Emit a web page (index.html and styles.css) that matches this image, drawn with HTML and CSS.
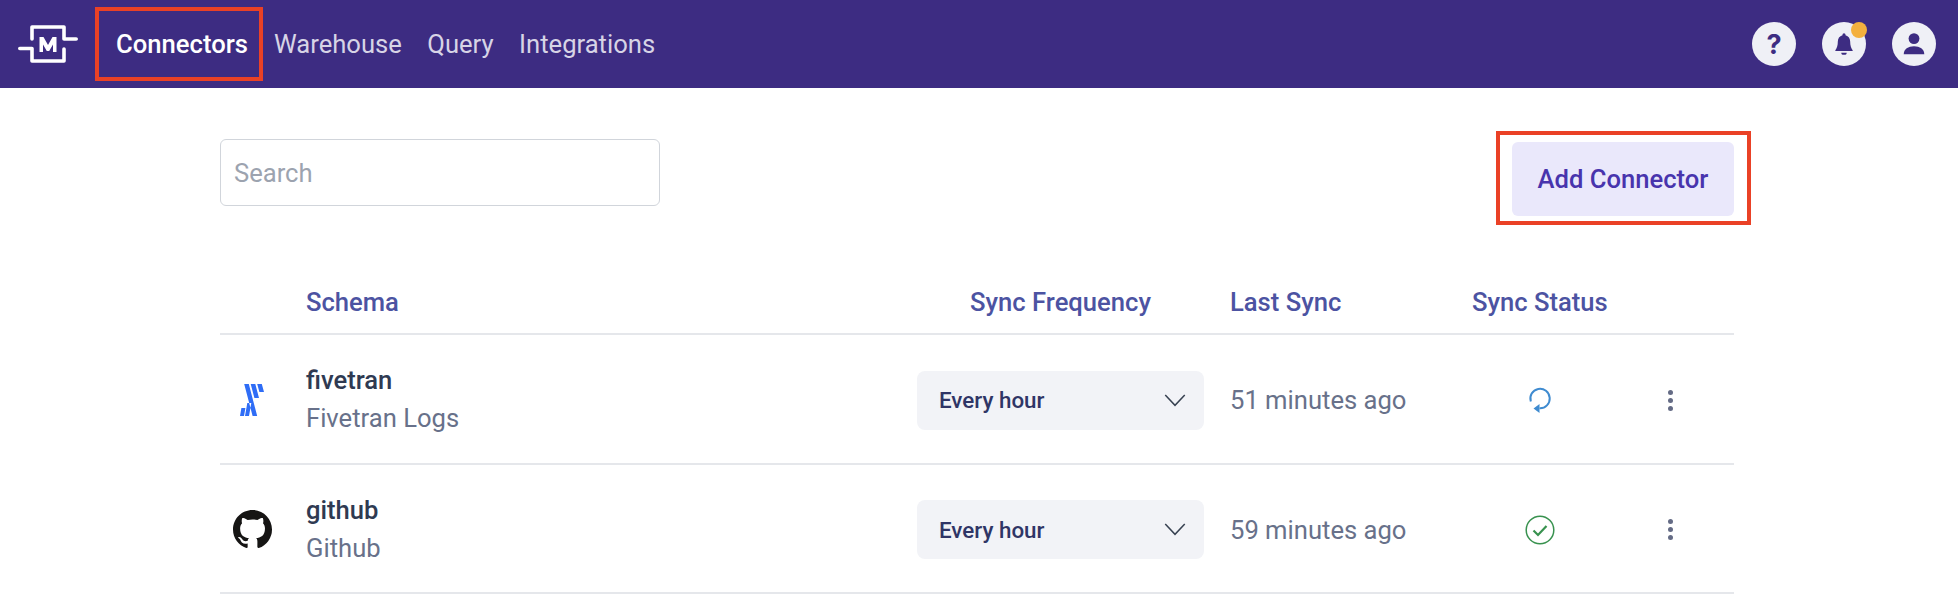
FILE: index.html
```html
<!DOCTYPE html>
<html lang="en">
<head>
<meta charset="utf-8">
<title>Connectors</title>
<link rel="stylesheet" href="styles.css">
</head>
<body>
<header class="topbar">
  <svg class="logo" viewBox="0 0 60 38" aria-hidden="true">
    <path d="M1.800 23.500H14V36H46V24M58.200 14H46V2H14V14" fill="none" stroke="#fff" stroke-width="3.600" stroke-linejoin="round" stroke-linecap="round"/>
    <path d="M21.500 27V12H25.500L30 20L34.500 12H38.500V27H35V19.500L31.200 26H28.800L25 19.500V27Z" fill="#fff"/>
  </svg>
  <nav class="nav">
    <a class="nav-link is-active">Connectors</a>
    <a class="nav-link">Warehouse</a>
    <a class="nav-link">Query</a>
    <a class="nav-link">Integrations</a>
  </nav>
  <div class="top-icons">
    <span class="round-btn round-help">?</span>
    <span class="round-btn round-bell">
      <svg viewBox="0 0 24 24" class="round-icon"><path d="M12 2a1.400 1.400 0 0 0-1.400 1.400v.5C7.800 4.600 6.300 7 6.300 9.800c0 3.700-.8 6.200-2.300 7.900v.8h16v-.8c-1.500-1.700-2.300-4.200-2.300-7.900 0-2.800-1.500-5.200-4.300-5.900v-.5A1.400 1.400 0 0 0 12 2zM9.500 20h5a2.500 2 0 0 1-5 0z" fill="#3d2c82"/></svg>
      <span class="dot"></span>
    </span>
    <span class="round-btn">
      <svg viewBox="0 0 24 24" class="round-icon"><circle cx="12" cy="7" r="5" fill="#3d2c82"/><path d="M2.500 21.500c0-5 4.200-7.500 9.500-7.500s9.500 2.500 9.500 7.500z" fill="#3d2c82"/></svg>
    </span>
  </div>
</header>
<main class="page">
  <div class="toolbar">
    <input class="search" type="text" placeholder="Search">
    <button class="add-btn">Add Connector</button>
  </div>
  <div class="grid-row head-row">
    <span></span>
    <span>Schema</span>
    <span class="head-center">Sync Frequency</span>
    <span>Last Sync</span>
    <span class="status-head">Sync Status</span>
    <span></span>
  </div>
  <div class="grid-row data-row">
    <span class="brand">
      <svg class="fivetran" viewBox="0 0 24 32"><path d="M4.200 0h4.600l8.400 32h-4.600zM10.700 0h4.600l3.700 14h-4.600zM17.200 0h4.600l2.200 8h-4.600zM0 32h4l1.400-8h-4zM5 32h4l2.300-13h-4z" fill="#2f6df6"/></svg>
    </span>
    <span class="schema"><b class="schema-name">fivetran</b><span class="schema-sub">Fivetran Logs</span></span>
    <span class="freq-cell"><span class="select">Every hour<svg class="chev" viewBox="0 0 20 12"><path d="M1 1l9 9.500 9-9.500" fill="none" stroke="#374151" stroke-width="1.400"/></svg></span></span>
    <span class="ago">51 minutes ago</span>
    <span class="status">
      <svg viewBox="0 0 24 28" class="st-sync"><path d="M2.800 15.500A9.700 9.700 0 1 1 11.500 22.200" fill="none" stroke="#3f8bd0" stroke-width="2"/><path d="M5.500 22.500l6-4.500v9z" fill="#3f8bd0"/></svg>
    </span>
    <span class="kebab"><i></i><i></i><i></i></span>
  </div>
  <div class="grid-row data-row data-row-last">
    <span class="brand">
      <svg class="github" viewBox="0 0 16 16"><path fill="#161514" fill-rule="evenodd" d="M8 0C3.580 0 0 3.580 0 8c0 3.540 2.290 6.530 5.470 7.590.4.070.55-.17.550-.38 0-.19-.01-.82-.01-1.490-2.010.37-2.530-.49-2.690-.94-.09-.23-.48-.94-.82-1.130-.28-.15-.68-.52-.01-.53.63-.01 1.080.58 1.230.82.720 1.210 1.870.870 2.330.660.070-.520.280-.870.510-1.070-1.780-.200-3.640-.890-3.640-3.950 0-.870.310-1.590.820-2.150-.080-.200-.360-1.020.080-2.120 0 0 .670-.210 2.200.820.640-.180 1.320-.270 2-.270s1.360.090 2 .270c1.530-1.040 2.200-.820 2.200-.820.440 1.100.160 1.920.080 2.120.510.560.820 1.270.820 2.150 0 3.070-1.870 3.750-3.650 3.950.290.250.540.730.540 1.480 0 1.070-.010 1.930-.010 2.200 0 .210.150.460.550.380A8.010 8.010 0 0 0 16 8c0-4.420-3.580-8-8-8z"/></svg>
    </span>
    <span class="schema"><b class="schema-name">github</b><span class="schema-sub">Github</span></span>
    <span class="freq-cell"><span class="select">Every hour<svg class="chev" viewBox="0 0 20 12"><path d="M1 1l9 9.500 9-9.500" fill="none" stroke="#374151" stroke-width="1.400"/></svg></span></span>
    <span class="ago">59 minutes ago</span>
    <span class="status">
      <svg viewBox="0 0 30 30" class="st-ok"><circle cx="15" cy="15" r="13.800" fill="none" stroke="#38924f" stroke-width="1.500"/><path d="M8.500 15.500l4.500 4.500 8.500-9" fill="none" stroke="#38924f" stroke-width="2.200"/></svg>
    </span>
    <span class="kebab"><i></i><i></i><i></i></span>
  </div>
</main>
</body>
</html>
```
FILE: styles.css
```css
* { box-sizing: border-box; }
html, body { margin: 0; padding: 0; }
body { height: 594px; overflow: hidden; background: #fff; font-family: Roboto, "Liberation Sans", sans-serif; }

.topbar { height: 88px; background: #3d2c82; display: flex; align-items: center; padding-left: 18px; }
.logo { width: 60px; height: 38px; flex: none; }
.nav { display: flex; align-items: center; margin-left: 17px; font-size: 25.600px; }
.nav-link { color: #d7d4e6; margin-right: 25.500px; }
.nav-link.is-active { color: #fff; font-weight: 500; height: 74px; width: 168px; margin-right: 11px; border: 4px solid #ea4126; display: flex; align-items: center; justify-content: center; padding-left: 6px; }
.top-icons { margin-left: auto; margin-right: 22px; display: flex; gap: 26px; }
.round-btn { position: relative; width: 44px; height: 44px; border-radius: 50%; background: #eff0f6; display: flex; align-items: center; justify-content: center; color: #3d2c82; }
.round-help { font: 700 27px Inter, sans-serif; }
.round-icon { width: 26px; height: 26px; }
.dot { position: absolute; top: 0; right: -1px; width: 16px; height: 16px; border-radius: 50%; background: #f4b03e; }

.page { padding: 0 224px 0 220px; }
.toolbar { display: flex; justify-content: space-between; align-items: flex-start; height: 128px; }
.search { width: 440px; height: 67px; margin-top: 51px; border: 1px solid #d1d5db; border-radius: 6px; padding: 0 13px; font: 400 25.600px Roboto, sans-serif; color: #374151; background: #fff; }
.search::placeholder { color: #9ca3af; opacity: 1; }
.add-btn { position: relative; width: 222px; height: 74px; margin-top: 54px; border: 0; border-radius: 6px; background: #eae8fb; color: #4834ad; font: 500 25.600px Roboto, sans-serif; padding: 0; }
.add-btn::after { content: ""; position: absolute; inset: -11px -17px -9px -16px; border: 4px solid #ea4126; }

.grid-row { display: grid; grid-template-columns: 86px 611px 313px 242px 135px 127px; align-items: center; }
.head-row { height: 119px; padding-top: 55px; border-bottom: 2px solid #e5e7eb; color: #4c53a2; font-size: 25.600px; font-weight: 500; }
.head-center { width: 287px; text-align: center; }
.status-head { text-align: center; white-space: nowrap; }
.data-row { height: 130px; padding-top: 2px; border-bottom: 2px solid #e5e7eb; }
.data-row-last { border-bottom-width: 3px; }
.brand { display: flex; justify-content: center; padding-right: 22px; }
.fivetran { width: 24px; height: 32px; }
.github { width: 39px; height: 39px; }
.schema { display: flex; flex-direction: column; gap: 12px; margin-top: -2px; }
.schema-name { color: #2f3a52; font-size: 25.600px; font-weight: 500; line-height: 26px; }
.schema-sub { color: #68718a; font-size: 25.600px; line-height: 26px; }
.select { width: 287px; height: 59px; border-radius: 8px; background: #f2f3f7; color: #2f3566; font-size: 22.400px; font-weight: 500; display: flex; align-items: center; justify-content: space-between; padding: 0 18px 0 22px; }
.freq-cell { display: block; }
.chev { width: 22px; height: 13px; }
.ago { color: #68718a; font-size: 25.600px; white-space: nowrap; }
.status { display: flex; justify-content: center; }
.st-sync { width: 24px; height: 28px; }
.st-ok { width: 30px; height: 30px; }
.kebab { display: flex; flex-direction: column; align-items: center; gap: 3px; }
.kebab i { width: 5px; height: 5px; border-radius: 50%; background: #646b85; }
```
